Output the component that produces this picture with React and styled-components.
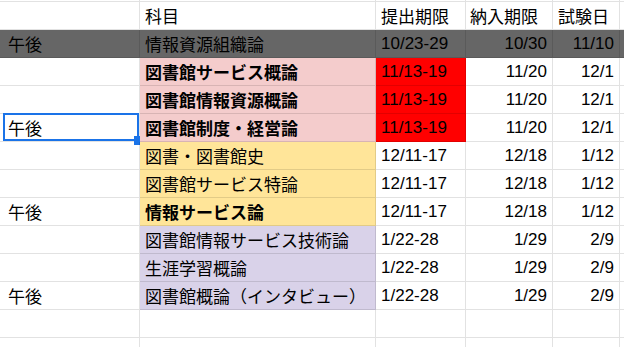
import React from "react"
import styled, { createGlobalStyle } from "styled-components"

const GlobalStyle = createGlobalStyle`
  html, body {
    margin: 0;
    padding: 0;
    background: #ffffff;
    overflow: hidden;
  }
`

const fills = {
  dark: "#666666",
  pink: "#f4cccc",
  red: "#ff0000",
  yellow: "#ffe599",
  purple: "#d9d2e9",
}

const Sheet = styled.div`
  width: 624px;
  height: 347px;
  overflow: hidden;
  font-family: "Liberation Sans", "Noto Sans CJK JP", sans-serif;
  font-size: 17px;
  color: #000000;
`

const Row = styled.div`
  display: grid;
  grid-template-columns: 140px 236px 90px 87px 67px 1fr;
  height: ${(p) => p.$height || 28}px;
  background: ${(p) => (p.$fill ? fills[p.$fill] : "transparent")};
`

const Cell = styled.div`
  position: relative;
  box-sizing: border-box;
  display: flex;
  align-items: center;
  justify-content: ${(p) => (p.$right ? "flex-end" : "flex-start")};
  padding: ${(p) => (p.$right ? "0 5px 0 0" : `0 0 0 ${p.$pad || 5}px`)};
  border-right: 1px solid rgba(0, 0, 0, 0.115);
  border-bottom: 1px solid rgba(0, 0, 0, 0.115);
  background: ${(p) => (p.$fill ? fills[p.$fill] : "transparent")};
  font-weight: ${(p) => (p.$bold ? 700 : 400)};
  white-space: nowrap;
  overflow: visible;
`

const Selection = styled.div`
  position: absolute;
  left: 3px;
  top: -1px;
  right: 0;
  bottom: 0;
  border: 2px solid #1a73e8;
  pointer-events: none;
`

const Handle = styled.div`
  position: absolute;
  right: -6px;
  bottom: -6px;
  width: 9px;
  height: 9px;
  background: #1a73e8;
`

const rows = [
  { a: "午後", b: "情報資源組織論", c: "10/23-29", d: "10/30", e: "11/10", row: "dark" },
  { b: "図書館サービス概論", c: "11/13-19", d: "11/20", e: "12/1", bFill: "pink", cFill: "red", bold: true },
  { b: "図書館情報資源概論", c: "11/13-19", d: "11/20", e: "12/1", bFill: "pink", cFill: "red", bold: true },
  { a: "午後", b: "図書館制度・経営論", c: "11/13-19", d: "11/20", e: "12/1", bFill: "pink", cFill: "red", bold: true, selected: true },
  { b: "図書・図書館史", c: "12/11-17", d: "12/18", e: "1/12", bFill: "yellow" },
  { b: "図書館サービス特論", c: "12/11-17", d: "12/18", e: "1/12", bFill: "yellow" },
  { a: "午後", b: "情報サービス論", c: "12/11-17", d: "12/18", e: "1/12", bFill: "yellow", bold: true },
  { b: "図書館情報サービス技術論", c: "1/22-28", d: "1/29", e: "2/9", bFill: "purple" },
  { b: "生涯学習概論", c: "1/22-28", d: "1/29", e: "2/9", bFill: "purple" },
  { a: "午後", b: "図書館概論（インタビュー）", c: "1/22-28", d: "1/29", e: "2/9", bFill: "purple" },
  {},
  {},
]

export default function App() {
  return (
    <Sheet>
      <GlobalStyle />
      <Row $height={2}>
        <Cell /><Cell /><Cell /><Cell /><Cell /><Cell />
      </Row>
      <Row>
        <Cell $pad={8} />
        <Cell>科目</Cell>
        <Cell>提出期限</Cell>
        <Cell $pad={4}>納入期限</Cell>
        <Cell>試験日</Cell>
        <Cell />
      </Row>
      {rows.map((r, i) => (
        <Row key={i} $fill={r.row}>
          <Cell $pad={8}>
            {r.a}
            {r.selected && (
              <Selection>
                <Handle />
              </Selection>
            )}
          </Cell>
          <Cell $fill={r.bFill} $bold={r.bold}>{r.b}</Cell>
          <Cell $fill={r.cFill}>{r.c}</Cell>
          <Cell $right>{r.d}</Cell>
          <Cell $right>{r.e}</Cell>
          <Cell />
        </Row>
      ))}
    </Sheet>
  )
}
